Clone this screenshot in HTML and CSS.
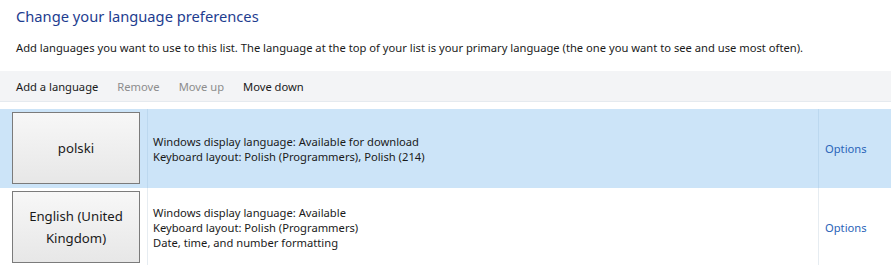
FILE: index.html
```html
<!DOCTYPE html>
<html lang="en">
<head>
  <meta charset="UTF-8" />
  <title>Language</title>
  <link rel="stylesheet" href="styles.css">
</head>
<body>
  <h1 class="title">Change your language preferences</h1>
  <p class="intro">Add languages you want to use to this list. The language at the top of your list is your primary language (the one you want to see and use most often).</p>

  <div class="toolbar">
    <span class="tool">Add a language</span>
    <span class="tool disabled">Remove</span>
    <span class="tool disabled">Move up</span>
    <span class="tool">Move down</span>
  </div>

  <div class="list">
    <div class="row selected">
      <div class="lang-cell"><div class="lang-btn">polski</div></div>
      <div class="info">
        <div>Windows display language: Available for download</div>
        <div>Keyboard layout: Polish (Programmers), Polish (214)</div>
      </div>
      <div class="opt"><a href="#">Options</a></div>
    </div>
    <div class="row">
      <div class="lang-cell"><div class="lang-btn">English (United<br>Kingdom)</div></div>
      <div class="info">
        <div>Windows display language: Available</div>
        <div>Keyboard layout: Polish (Programmers)</div>
        <div>Date, time, and number formatting</div>
      </div>
      <div class="opt"><a href="#">Options</a></div>
    </div>
  </div>
</body>
</html>
```

FILE: styles.css
```css
body {
  margin: 0;
  font-family: "Noto Sans", "Open Sans", sans-serif;
  font-size: 11.2px;
  color: #1a1a1a;
  background: #fff;
  overflow: hidden;
}
.title {
  margin: 0;
  padding: 4px 0 0 16px;
  font-size: 14.7px;
  font-weight: normal;
  color: #1e3d8f;
  height: 32px;
  line-height: 24px;
  box-sizing: border-box;
}
.intro {
  margin: 0;
  padding: 8px 0 0 16px;
  height: 39px;
  box-sizing: border-box;
  line-height: 16px;
}
.toolbar {
  display: flex;
  gap: 19px;
  height: 31px;
  box-sizing: border-box;
  align-items: center;
  padding-left: 16px;
  background: #f3f4f6;
  border-bottom: 1px solid #e5eaef;
}
.tool.disabled {
  color: #8d8d8d;
}
.list {
  margin-top: 7px;
}
.row {
  display: flex;
  height: 79px;
}
.row.selected {
  background: #cce4f8;
}
.lang-cell {
  width: 148px;
  padding: 3px 0 0 12px;
  box-sizing: border-box;
  border-right: 1px solid #e6ecf1;
}
.row.selected .lang-cell,
.row.selected .opt {
  border-color: #bcd8ef;
}
.lang-btn {
  width: 128px;
  height: 72px;
  box-sizing: border-box;
  border: 1px solid #7b7b7b;
  background: linear-gradient(#f7f7f7, #e7e7e7);
  display: flex;
  align-items: center;
  justify-content: center;
  text-align: center;
  font-size: 13.2px;
  line-height: 22px;
}
.info {
  flex: 1;
  display: flex;
  flex-direction: column;
  justify-content: center;
  padding-left: 5px;
  line-height: 15px;
}
.opt {
  width: 73px;
  box-sizing: border-box;
  border-left: 1px solid #e6ecf1;
  display: flex;
  align-items: center;
  padding-left: 6px;
}
.opt a {
  color: #2a64b8;
  text-decoration: none;
}
```
